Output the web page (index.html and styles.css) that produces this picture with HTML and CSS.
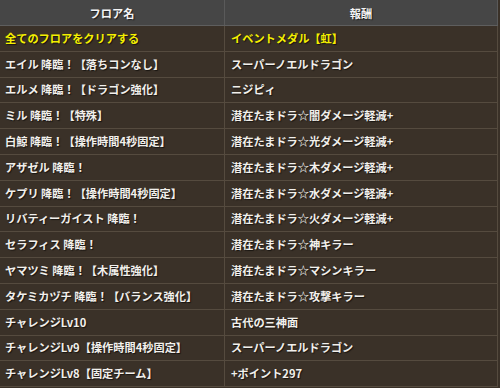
FILE: index.html
```html
<!DOCTYPE html>
<html lang="ja">
<head>
<meta charset="utf-8">
<link rel="stylesheet" href="styles.css">
</head>
<body>
<table class="rewards">
  <thead>
    <tr><th class="col-floor">フロア名</th><th class="col-reward">報酬</th></tr>
  </thead>
  <tbody>
    <tr class="all"><td>全てのフロアをクリアする</td><td>イベントメダル【虹】</td></tr>
    <tr><td>エイル 降臨！【落ちコンなし】</td><td>スーパーノエルドラゴン</td></tr>
    <tr><td>エルメ 降臨！【ドラゴン強化】</td><td>ニジピィ</td></tr>
    <tr><td>ミル 降臨！【特殊】</td><td>潜在たまドラ☆闇ダメージ軽減+</td></tr>
    <tr><td>白鯨 降臨！【操作時間4秒固定】</td><td>潜在たまドラ☆光ダメージ軽減+</td></tr>
    <tr><td>アザゼル 降臨！</td><td>潜在たまドラ☆木ダメージ軽減+</td></tr>
    <tr><td>ケプリ 降臨！【操作時間4秒固定】</td><td>潜在たまドラ☆水ダメージ軽減+</td></tr>
    <tr><td>リバティーガイスト 降臨！</td><td>潜在たまドラ☆火ダメージ軽減+</td></tr>
    <tr><td>セラフィス 降臨！</td><td>潜在たまドラ☆神キラー</td></tr>
    <tr><td>ヤマツミ 降臨！【木属性強化】</td><td>潜在たまドラ☆マシンキラー</td></tr>
    <tr><td>タケミカヅチ 降臨！【バランス強化】</td><td>潜在たまドラ☆攻撃キラー</td></tr>
    <tr><td>チャレンジLv10</td><td>古代の三神面</td></tr>
    <tr><td>チャレンジLv9【操作時間4秒固定】</td><td>スーパーノエルドラゴン</td></tr>
    <tr><td>チャレンジLv8【固定チーム】</td><td>+ポイント297</td></tr>
  </tbody>
</table>
</body>
</html>
```

FILE: styles.css
```css
html, body {
  margin: 0;
  padding: 0;
  background: #3a3128;
  overflow: hidden;
}
.rewards {
  width: 498px;
  border-collapse: collapse;
  table-layout: fixed;
  font-family: "Noto Sans CJK JP", "Liberation Sans", sans-serif;
  font-weight: bold;
  font-size: 11.2px;
  color: #f2f0ec;
  background: #3a3128;
  text-shadow: 1px 1px 1px rgba(0,0,0,0.6);
}
.col-floor { width: 224px; }
.rewards th {
  background: #464646;
  height: 25px;
  padding: 0;
  border-bottom: 1px solid #5e5e5e;
  border-right: 1px solid #5a5a5a;
  text-align: center;
  font-weight: bold;
  color: #f4f4f4;
}
.rewards td {
  height: 24.8px;
  padding: 0 0 0 5px;
  border-bottom: 1px solid #554b3f;
  border-right: 1px solid #554b3f;
  white-space: nowrap;
  line-height: 1;
  vertical-align: middle;
}
.rewards td + td { padding-left: 6px; }
.rewards tr.all td { color: #f5f000; }
```
